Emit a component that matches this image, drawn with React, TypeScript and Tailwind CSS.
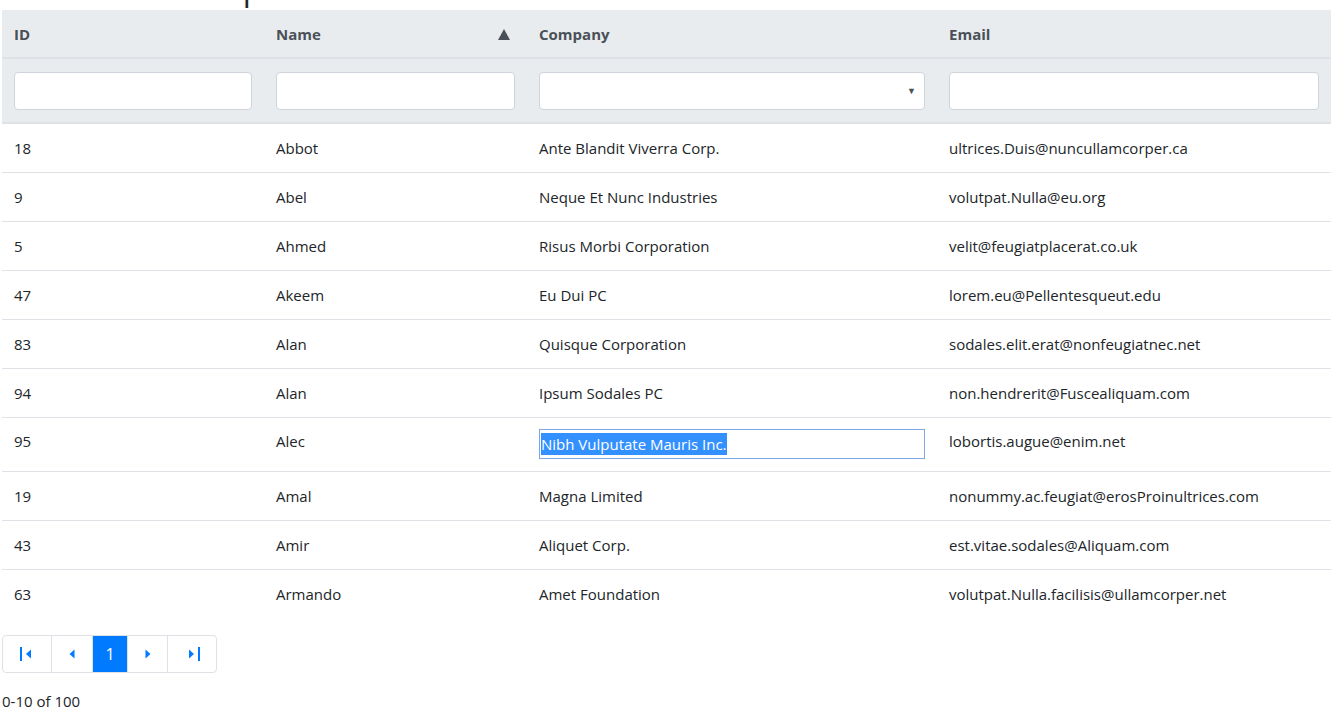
import React from "react";

const ROWS = [
  { id: 18, name: "Abbot", company: "Ante Blandit Viverra Corp.", email: "ultrices.Duis@nuncullamcorper.ca" },
  { id: 9, name: "Abel", company: "Neque Et Nunc Industries", email: "volutpat.Nulla@eu.org" },
  { id: 5, name: "Ahmed", company: "Risus Morbi Corporation", email: "velit@feugiatplacerat.co.uk" },
  { id: 47, name: "Akeem", company: "Eu Dui PC", email: "lorem.eu@Pellentesqueut.edu" },
  { id: 83, name: "Alan", company: "Quisque Corporation", email: "sodales.elit.erat@nonfeugiatnec.net" },
  { id: 94, name: "Alan", company: "Ipsum Sodales PC", email: "non.hendrerit@Fuscealiquam.com" },
  { id: 95, name: "Alec", company: "Nibh Vulputate Mauris Inc.", email: "lobortis.augue@enim.net", editing: true },
  { id: 19, name: "Amal", company: "Magna Limited", email: "nonummy.ac.feugiat@erosProinultrices.com" },
  { id: 43, name: "Amir", company: "Aliquet Corp.", email: "est.vitae.sodales@Aliquam.com" },
  { id: 63, name: "Armando", company: "Amet Foundation", email: "volutpat.Nulla.facilisis@ullamcorper.net" },
];

const font = { fontFamily: '"Open Sans", "Noto Sans", sans-serif' };

function FilterInput() {
  return <div className="h-[38px] rounded border border-[#ced4da] bg-white" />;
}

function PageBtn({ children, active, last }: { children: React.ReactNode; active?: boolean; last?: boolean }) {
  return (
    <div
      className={`flex h-full items-center justify-center ${last ? "" : "border-r border-[#dee2e6]"} ${
        active ? "bg-[#007bff] text-white" : "text-[#007bff]"
      }`}
    >
      {children}
    </div>
  );
}

export default function App() {
  return (
    <div className="min-h-screen bg-white text-[#212529] text-[15px]" style={font}>
      <h2 className="-mt-[34px] ml-[33px] h-[44px] text-[32px] font-medium leading-[44px] text-[#212529]">
        Cell Edit Example
      </h2>
      <div className="mx-[2px] w-[1329px]">
        <div className="grid grid-cols-[262px_263px_410px_394px] bg-[#e9ecef] text-[#495057]">
          <div className="flex h-[49px] items-center border-b-2 border-[#dee2e6] px-3 pt-[1px] font-bold">ID</div>
          <div className="flex h-[49px] items-center justify-between border-b-2 border-[#dee2e6] px-3 pt-[1px] font-bold">
            <span>Name</span>
            <svg width="12" height="11" viewBox="0 0 12 11" className="mr-[5px]">
              <path d="M6 0 L12 11 L0 11 Z" fill="#495057" />
            </svg>
          </div>
          <div className="flex h-[49px] items-center border-b-2 border-[#dee2e6] px-3 pt-[1px] font-bold">Company</div>
          <div className="flex h-[49px] items-center border-b-2 border-[#dee2e6] px-3 pt-[1px] font-bold">Email</div>
          <div className="h-[65px] border-b-2 border-[#dee2e6] px-3 pt-[13px]">
            <FilterInput />
          </div>
          <div className="h-[65px] border-b-2 border-[#dee2e6] px-3 pt-[13px]">
            <FilterInput />
          </div>
          <div className="h-[65px] border-b-2 border-[#dee2e6] px-3 pt-[13px]">
            <div className="flex h-[38px] items-center justify-end rounded border border-[#ced4da] bg-white pr-[8px] text-[9px] text-[#495057]">
              ▼
            </div>
          </div>
          <div className="h-[65px] border-b-2 border-[#dee2e6] px-3 pt-[13px]">
            <FilterInput />
          </div>
        </div>
        {ROWS.map((r, i) => (
          <div
            key={r.id}
            className={`grid grid-cols-[262px_263px_410px_394px] ${
              i < ROWS.length - 1 ? "border-b border-[#dee2e6]" : ""
            } ${r.editing ? "h-[54px]" : "h-[49px]"}`}
          >
            <div className={`px-3 ${r.editing ? "pt-[12px]" : "pt-[13px]"}`}>{r.id}</div>
            <div className={`px-3 ${r.editing ? "pt-[12px]" : "pt-[13px]"}`}>{r.name}</div>
            <div className={`px-3 ${r.editing ? "pt-[11px]" : "pt-[13px]"}`}>
              {r.editing ? (
                <div className="flex h-[30px] items-center border border-[#7ea6e6] px-[1px]">
                  <span className="bg-[#3390ff] leading-[22px] text-white">{r.company}</span>
                </div>
              ) : (
                r.company
              )}
            </div>
            <div className={`px-3 ${r.editing ? "pt-[12px]" : "pt-[13px]"}`}>{r.email}</div>
          </div>
        ))}
      </div>
      <div className="ml-[2px] mt-[16px] grid h-[38px] w-[215px] grid-cols-[49px_41px_35px_40px_49px] overflow-hidden rounded border border-[#dee2e6] text-[16px]">
        <PageBtn>
          <svg width="18" height="14" viewBox="0 0 18 14">
            <rect x="2" y="0" width="2" height="14" fill="#007bff" />
            <path d="M13 2.5 L8 7 L13 11.5 Z" fill="#007bff" />
          </svg>
        </PageBtn>
        <PageBtn>
          <svg width="8" height="14" viewBox="0 0 8 14">
            <path d="M6.5 2.5 L1.5 7 L6.5 11.5 Z" fill="#007bff" />
          </svg>
        </PageBtn>
        <PageBtn active>1</PageBtn>
        <PageBtn>
          <svg width="8" height="14" viewBox="0 0 8 14">
            <path d="M1.5 2.5 L6.5 7 L1.5 11.5 Z" fill="#007bff" />
          </svg>
        </PageBtn>
        <PageBtn last>
          <svg width="18" height="14" viewBox="0 0 18 14">
            <path d="M5 2.5 L10 7 L5 11.5 Z" fill="#007bff" />
            <rect x="14" y="0" width="2" height="14" fill="#007bff" />
          </svg>
        </PageBtn>
      </div>
      <div className="ml-[2px] mt-[17px] text-[15px]">0-10 of 100</div>
    </div>
  );
}
